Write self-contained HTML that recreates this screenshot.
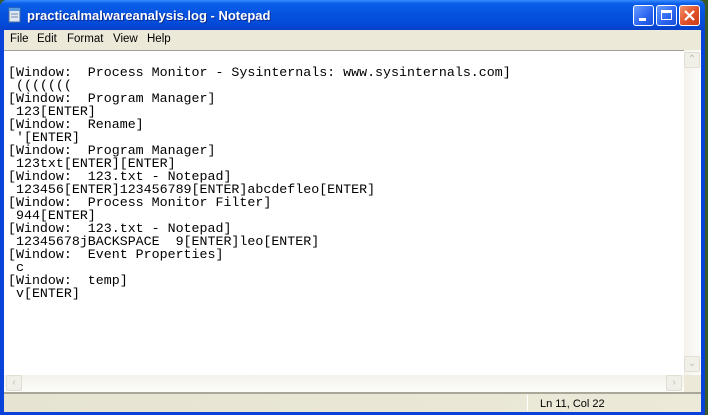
<!DOCTYPE html>
<html><head><style>
*{margin:0;padding:0;box-sizing:border-box}
body{width:708px;height:415px;overflow:hidden;background:#3a5a2a;position:relative;font-family:"Liberation Sans",sans-serif}
#win{position:absolute;left:0;top:0;width:705px;height:415px;background:#0842d8;border-radius:7px 7px 0 0}
#title{position:absolute;left:0;top:0;width:705px;height:30px;border-radius:7px 7px 0 0;background:linear-gradient(#3a8cff 0%,#0a5ee8 12%,#0552e0 50%,#0448d6 85%,#0740c8 100%)}
#title .t{position:absolute;left:27px;top:8px;color:#fff;font-weight:bold;font-size:13px;text-shadow:1px 1px 0 #0a2a90}
.btn{position:absolute;top:5px;width:21px;height:21px;border:1px solid #fff;border-radius:3px;background:linear-gradient(135deg,#6a9cff,#2a64f0 60%,#1a50d8)}
#close{background:linear-gradient(135deg,#f0906a,#e0502a 55%,#c63c1a)}
#menu{position:absolute;left:4px;top:30px;width:697px;height:20px;background:#ece9d8;font-size:11.5px;color:#000}
#menu span{position:absolute;top:3px}
#text{position:absolute;left:4px;top:50px;width:680px;height:325px;background:#fff;border-top:1px solid #a0a0a0}
pre{position:absolute;left:4px;top:15px;font-family:"Liberation Mono",monospace;font-size:13.3px;line-height:13px;color:#000}
#vs{position:absolute;left:684px;top:50px;width:17px;height:325px;background:linear-gradient(90deg,#f3f1ea,#fdfdfa)}
#hs{position:absolute;left:4px;top:375px;width:680px;height:17px;background:linear-gradient(#f3f1ea,#fdfdfa)}
.sb{position:absolute;width:16px;height:16px;border:1px solid #e0ded2;border-radius:2px;background:#f0efe8;color:#c0beb4;font-size:10px;text-align:center;line-height:14px}
#corner{position:absolute;left:684px;top:375px;width:17px;height:17px;background:#ece9d8}
#status{position:absolute;left:4px;top:392px;width:697px;height:20px;background:linear-gradient(90deg,#e6e3d2,#ece9d8);border-top:2px solid #a9a799;font-size:11px}
</style></head><body>
<div id="win">
<div id="title">
<svg style="position:absolute;left:8px;top:7px" width="14" height="16"><rect x="1" y="1" width="11" height="14" fill="#dfe8f5" stroke="#4a6a9a"/><rect x="1" y="1" width="11" height="3" fill="#5a9ae0"/><line x1="3" y1="7" x2="10" y2="7" stroke="#7a8aa0"/><line x1="3" y1="10" x2="10" y2="10" stroke="#7a8aa0"/></svg>
<div class="t">practicalmalwareanalysis.log - Notepad</div>
<div class="btn" style="left:633px"><div style="position:absolute;left:5px;top:12px;width:7px;height:3px;background:#fff"></div></div>
<div class="btn" style="left:656px"><div style="position:absolute;left:4px;top:4px;width:11px;height:10px;border:1px solid #fff;border-top:3px solid #fff"></div></div>
<div class="btn" id="close" style="left:679px"><svg width="19" height="19" style="position:absolute;left:0;top:0"><path d="M5 5L14 14M14 5L5 14" stroke="#fff" stroke-width="2.2"/></svg></div>
</div>
<div id="menu"><span style="left:6px">File</span><span style="left:33px">Edit</span><span style="left:63px">Format</span><span style="left:109px">View</span><span style="left:143px">Help</span></div>
<div id="text"><pre>[Window:  Process Monitor - Sysinternals: www.sysinternals.com]
 (((((((
[Window:  Program Manager]
 123[ENTER]
[Window:  Rename]
 '[ENTER]
[Window:  Program Manager]
 123txt[ENTER][ENTER]
[Window:  123.txt - Notepad]
 123456[ENTER]123456789[ENTER]abcdefleo[ENTER]
[Window:  Process Monitor Filter]
 944[ENTER]
[Window:  123.txt - Notepad]
 12345678jBACKSPACE  9[ENTER]leo[ENTER]
[Window:  Event Properties]
 c
[Window:  temp]
 v[ENTER]</pre></div>
<div id="vs"><div class="sb" style="left:0;top:2px">&#8963;</div><div class="sb" style="left:0;top:306px">&#8964;</div></div>
<div id="hs"><div class="sb" style="left:2px;top:0">&lsaquo;</div><div class="sb" style="left:662px;top:0">&rsaquo;</div></div>
<div id="corner"></div>
<div id="status"><div style="position:absolute;left:523px;top:1px;width:1px;height:16px;background:#c0bdaa;border-right:1px solid #fff"></div><span style="position:absolute;left:536px;top:4px">Ln 11, Col 22</span></div>
</div>
</body></html>
